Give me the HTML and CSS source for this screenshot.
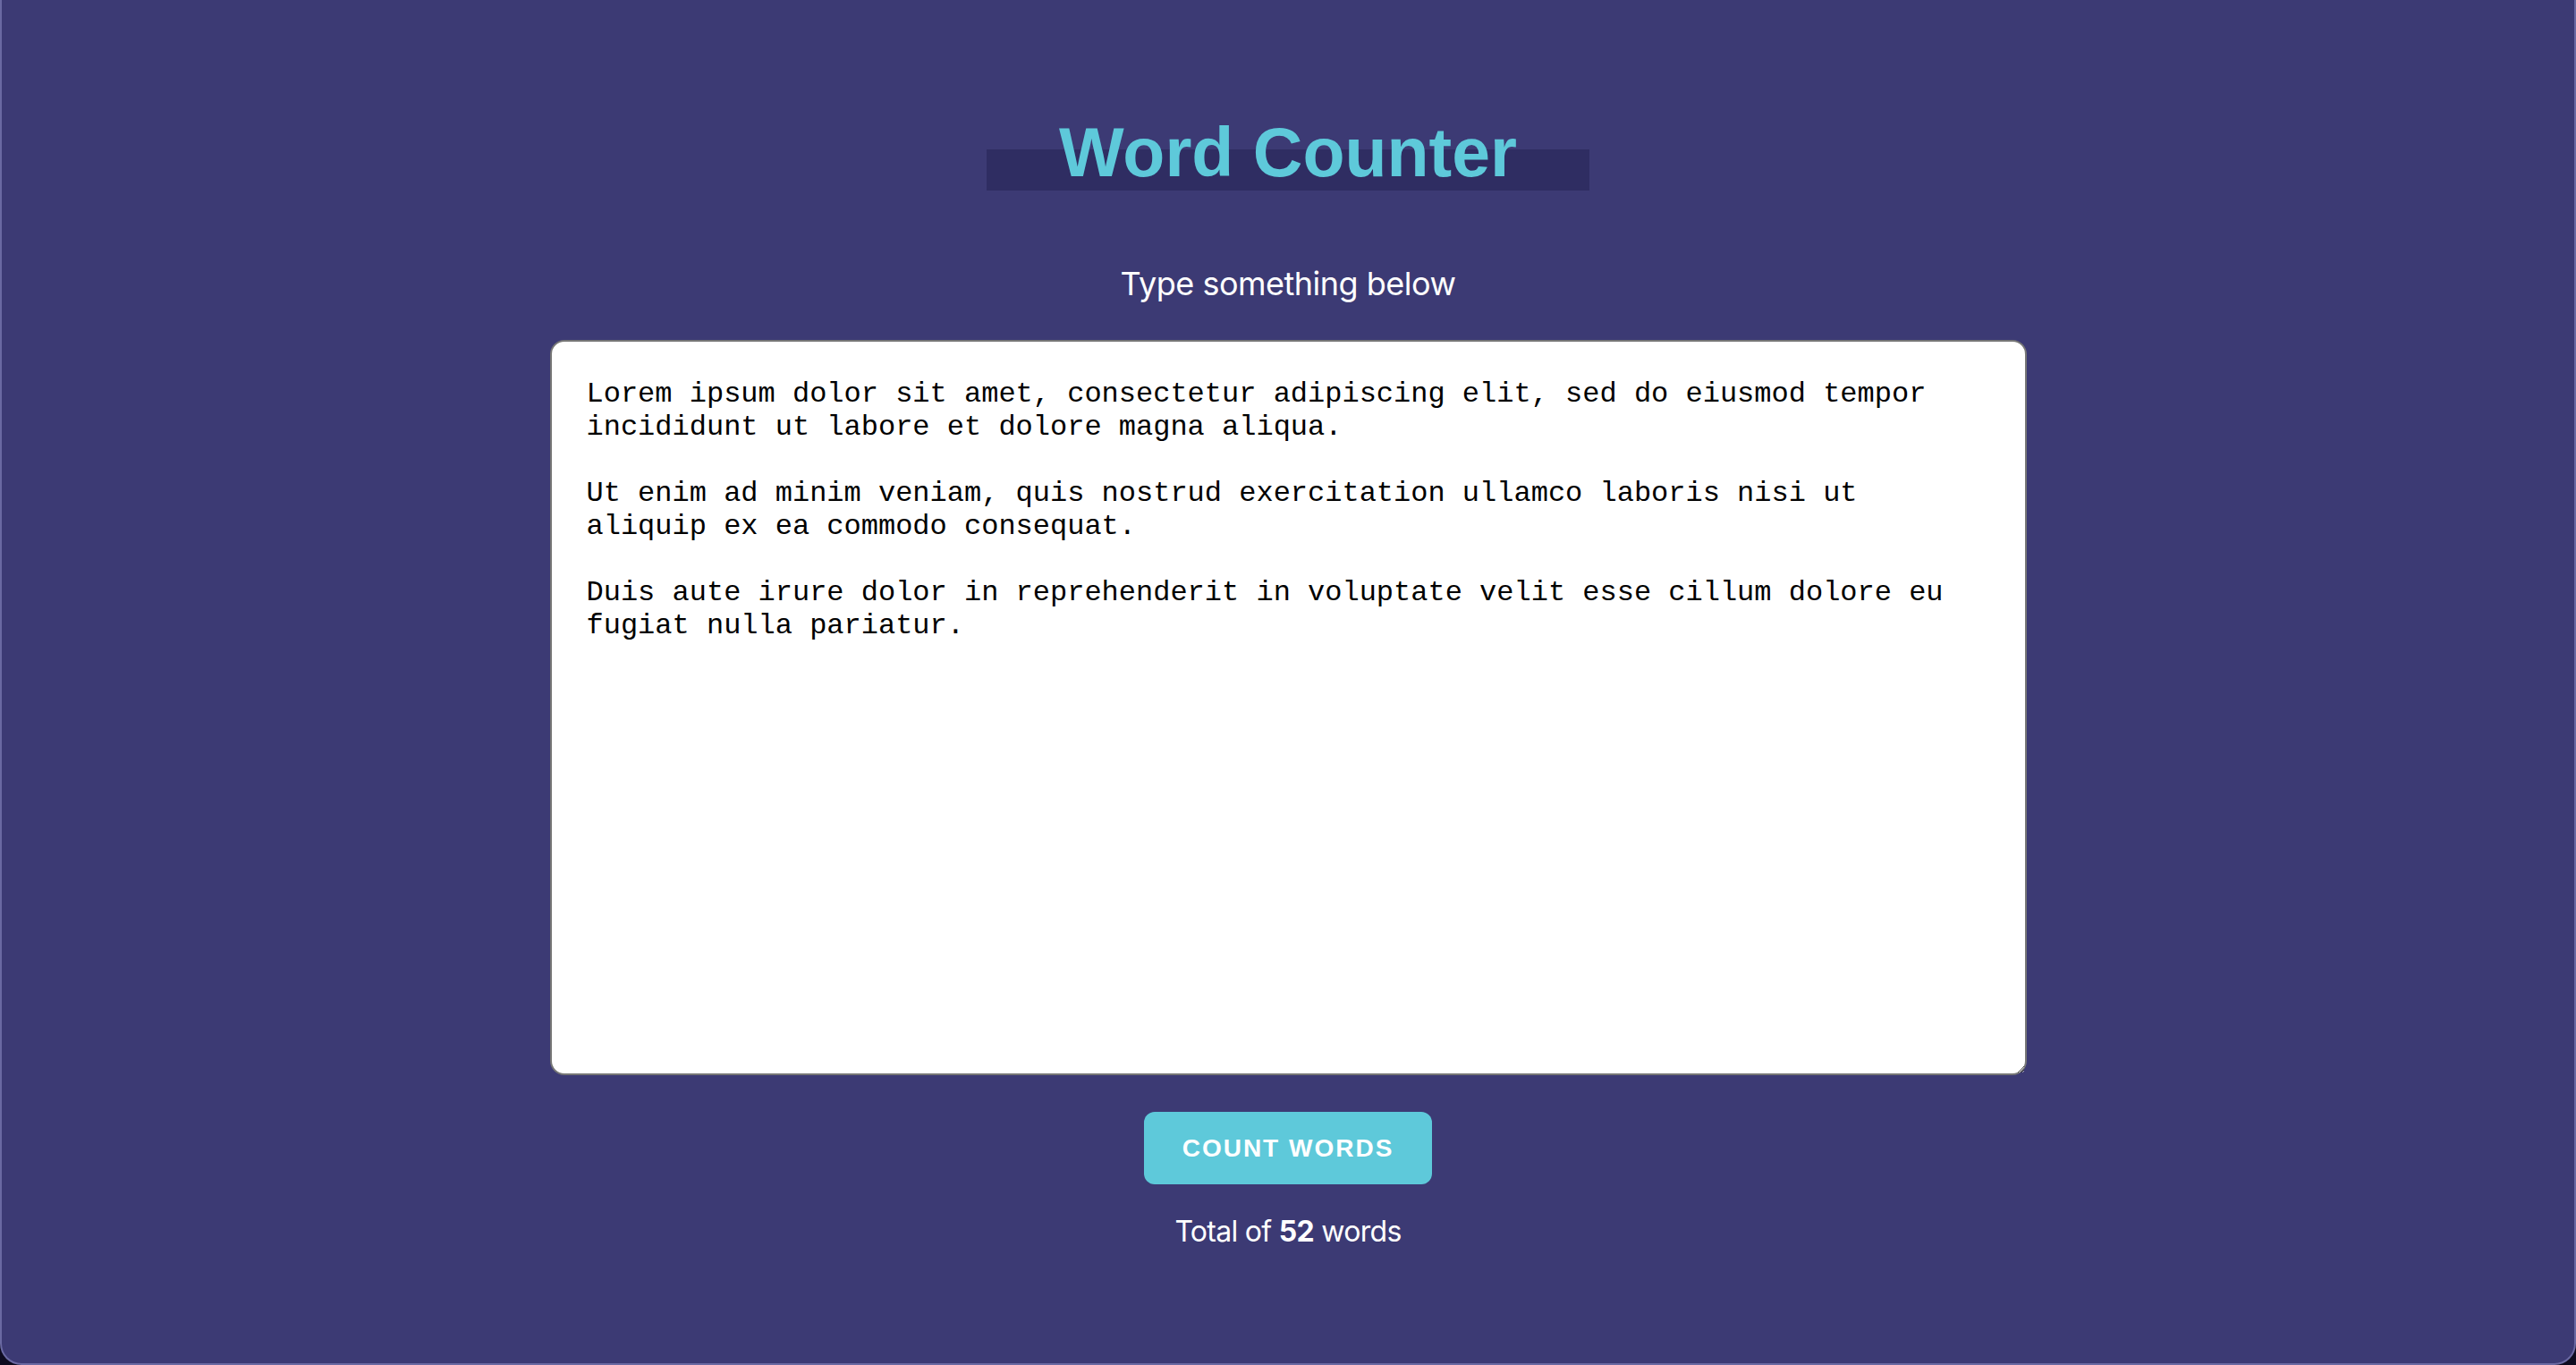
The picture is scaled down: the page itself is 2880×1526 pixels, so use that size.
FILE: index.html
```html
<!DOCTYPE html>
<html lang="en">
<head>
<meta charset="utf-8">
<title>Word Counter</title>
<link rel="stylesheet" href="styles.css">
</head>
<body>
<div class="window">
  <main class="app">
    <h1 class="title">Word Counter</h1>
    <p class="subtitle">Type something below</p>
    <textarea class="editor" spellcheck="false">Lorem ipsum dolor sit amet, consectetur adipiscing elit, sed do eiusmod tempor incididunt ut labore et dolore magna aliqua.

Ut enim ad minim veniam, quis nostrud exercitation ullamco laboris nisi ut aliquip ex ea commodo consequat.

Duis aute irure dolor in reprehenderit in voluptate velit esse cillum dolore eu fugiat nulla pariatur.</textarea>
    <button class="count-btn" type="button">COUNT WORDS</button>
    <p class="total">Total of <strong>52</strong> words</p>
  </main>
</div>
</body>
</html>
```

FILE: styles.css
```css
html, body {
  margin: 0;
  padding: 0;
  background: #0d0b1f;
}

.window {
  box-sizing: border-box;
  height: 1526px;
  background: #3c3a74;
  border-left: 2px solid #6a69a2;
  border-right: 2px solid #6a69a2;
  border-bottom: 2px solid #6a69a2;
  border-radius: 0 0 24px 24px;
  overflow: hidden;
}

.app {
  display: flex;
  flex-direction: column;
  align-items: center;
  padding-top: 126px;
}

.title {
  position: relative;
  z-index: 0;
  margin: 0;
  font-family: "Liberation Sans", Arial, sans-serif;
  font-weight: 700;
  font-size: 77px;
  line-height: 88px;
  color: #5ec9da;
}

.title::before {
  content: "";
  position: absolute;
  z-index: -1;
  top: 41px;
  left: 50%;
  width: 674px;
  height: 46px;
  transform: translateX(-50%);
  background: #2f2d62;
}

.subtitle {
  margin: 80px 0 0;
  font-family: Inter, "Noto Sans", sans-serif;
  font-size: 36px;
  letter-spacing: -0.5px;
  line-height: 46px;
  color: #ffffff;
}

.editor {
  box-sizing: border-box;
  margin-top: 40px;
  width: 1651px;
  height: 822px;
  padding: 40px 40px 40px 39px;
  border: 2px solid #767676;
  border-radius: 16px;
  background: #ffffff;
  color: #000000;
  font-family: "Liberation Mono", "Courier New", monospace;
  font-size: 32px;
  line-height: 37px;
  outline: none;
  resize: both;
}

.count-btn {
  margin-top: 41px;
  width: 322px;
  height: 81px;
  border: none;
  border-radius: 12px;
  background: #5ec9da;
  color: #ffffff;
  font-family: "Liberation Sans", Arial, sans-serif;
  font-weight: 700;
  font-size: 28px;
  letter-spacing: 2px;
  cursor: pointer;
}

.total {
  margin: 33px 0 0;
  font-family: Inter, "Noto Sans", sans-serif;
  font-size: 32px;
  letter-spacing: -0.7px;
  line-height: 39px;
  color: #ffffff;
}

.total strong {
  font-weight: 700;
}
```
